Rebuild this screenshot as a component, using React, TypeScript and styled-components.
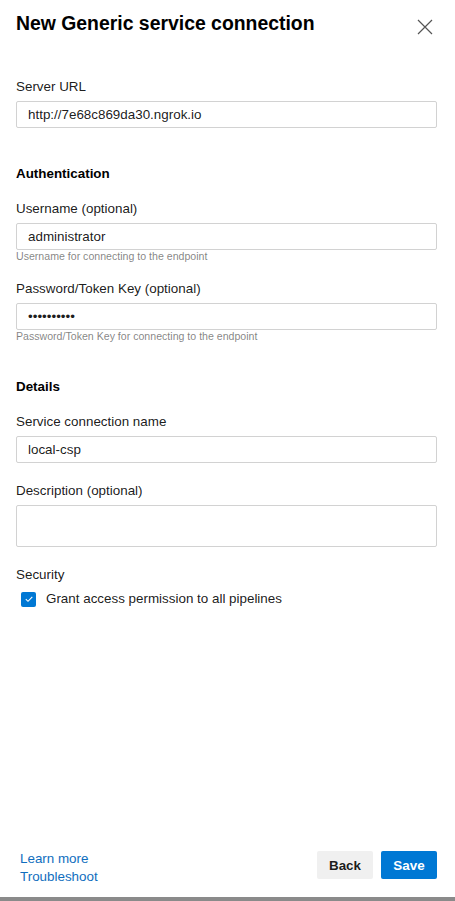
import styled, { createGlobalStyle } from "styled-components"

const GlobalStyle = createGlobalStyle`
  html, body {
    margin: 0;
    padding: 0;
    background: #8a8a8a;
  }
  body {
    font-family: "Liberation Sans", Arial, sans-serif;
    color: rgba(0, 0, 0, 0.9);
  }
`

function CloseIcon() {
  return (
    <svg width="16" height="16" viewBox="0 0 16 16">
      <path d="M1 1 L15 15 M15 1 L1 15" stroke="#555" strokeWidth="1.2" fill="none" />
    </svg>
  )
}

function CheckIcon() {
  return (
    <svg width="10" height="10" viewBox="0 0 10 10">
      <path d="M1.8 5.2 L4 7.3 L8.3 2.8" stroke="#fff" strokeWidth="1.1" fill="none" />
    </svg>
  )
}

function App() {
  return (
    <>
      <GlobalStyle />
      <Panel>
        <Header>
          <Title>New Generic service connection</Title>
          <CloseButton aria-label="Close">
            <CloseIcon />
          </CloseButton>
        </Header>

        <Body>
          <Field>
            <Label>Server URL</Label>
            <Input defaultValue="http://7e68c869da30.ngrok.io" />
          </Field>

          <SectionTitle>Authentication</SectionTitle>
          <Field>
            <Label>Username (optional)</Label>
            <Input defaultValue="administrator" />
            <Helper>Username for connecting to the endpoint</Helper>
          </Field>
          <Field>
            <Label>Password/Token Key (optional)</Label>
            <Input type="password" defaultValue="••••••••••" />
            <Helper>Password/Token Key for connecting to the endpoint</Helper>
          </Field>

          <SectionTitle>Details</SectionTitle>
          <Field>
            <Label>Service connection name</Label>
            <Input defaultValue="local-csp" />
          </Field>
          <Field>
            <Label>Description (optional)</Label>
            <TextArea />
          </Field>
          <Field>
            <Label>Security</Label>
            <CheckRow>
              <CheckBox>
                <CheckIcon />
              </CheckBox>
              <CheckLabel>Grant access permission to all pipelines</CheckLabel>
            </CheckRow>
          </Field>
        </Body>

        <Footer>
          <Links>
            <Link href="#">Learn more</Link>
            <Link href="#">Troubleshoot</Link>
          </Links>
          <Buttons>
            <Button>Back</Button>
            <Button primary>Save</Button>
          </Buttons>
        </Footer>
      </Panel>
    </>
  )
}

const Panel = styled.div`
  width: 455px;
  height: 897px;
  background: #fff;
  display: flex;
  flex-direction: column;
  box-sizing: border-box;
`

const Header = styled.div`
  display: flex;
  justify-content: space-between;
  align-items: flex-start;
  padding: 11px 22px 0 16px;
`

const Title = styled.h1`
  margin: 0;
  font-size: 19.4px;
  line-height: 24px;
  font-weight: 700;
  color: #000;
`

const CloseButton = styled.button`
  border: none;
  background: transparent;
  padding: 0;
  margin-top: 8px;
  width: 16px;
  height: 16px;
  display: flex;
`

const Body = styled.div`
  padding: 40px 18px 0 16px;
  display: flex;
  flex-direction: column;
`

const Field = styled.div`
  display: flex;
  flex-direction: column;
  margin-bottom: 16px;
`

const Label = styled.label`
  font-size: 13.4px;
  line-height: 20px;
  margin: 2px 0 4px;
  color: rgba(0, 0, 0, 0.9);
`

const SectionTitle = styled.h2`
  margin: 20px 0 13px;
  font-size: 13.4px;
  line-height: 20px;
  font-weight: 700;
  color: #000;
`

const Input = styled.input`
  box-sizing: border-box;
  height: 27px;
  width: 100%;
  border: 1px solid #d2d2d2;
  border-radius: 2px;
  padding: 0 11px;
  font-family: "Liberation Sans", Arial, sans-serif;
  font-size: 13.4px;
  color: rgba(0, 0, 0, 0.9);
  outline: none;
  background: #fff;
`

const TextArea = styled.textarea`
  box-sizing: border-box;
  height: 42px;
  width: 100%;
  border: 1px solid #d2d2d2;
  border-radius: 2px;
  resize: none;
  outline: none;
  display: block;
`

const Helper = styled.div`
  font-size: 10.6px;
  line-height: 12px;
  margin-bottom: -1px;
  color: rgba(0, 0, 0, 0.5);
`

const CheckRow = styled.div`
  display: flex;
  align-items: center;
  gap: 10px;
  padding-left: 5px;
`

const CheckBox = styled.span`
  width: 15px;
  height: 15px;
  border-radius: 2px;
  background: #0078d4;
  display: flex;
  align-items: center;
  justify-content: center;
`

const CheckLabel = styled.span`
  font-size: 13.4px;
  line-height: 20px;
  color: rgba(0, 0, 0, 0.9);
`

const Footer = styled.div`
  margin-top: auto;
  height: 46px;
  box-sizing: border-box;
  display: flex;
  justify-content: space-between;
  align-items: flex-start;
  padding: 0 18px 0 20px;
`

const Links = styled.div`
  display: flex;
  flex-direction: column;
  margin-top: -1px;
`

const Link = styled.a`
  font-size: 13.4px;
  line-height: 18px;
  color: #106ebe;
  text-decoration: none;
`

const Buttons = styled.div`
  display: flex;
  gap: 8px;
`

const Button = styled.button<{ primary?: boolean }>`
  height: 28px;
  padding: 0 10px;
  border: none;
  border-radius: 2px;
  font-family: "Liberation Sans", Arial, sans-serif;
  font-size: 13.4px;
  font-weight: 700;
  background: ${({ primary }) => (primary ? "#0078d4" : "#f0f0f0")};
  color: ${({ primary }) => (primary ? "#fff" : "rgba(0, 0, 0, 0.9)")};
  min-width: 56px;
`

export default App
